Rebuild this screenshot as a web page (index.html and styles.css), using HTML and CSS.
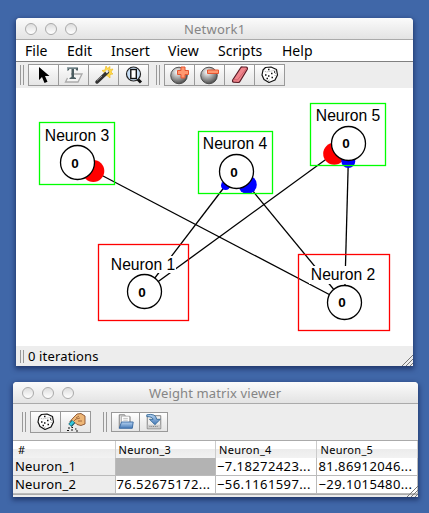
FILE: index.html
```html
<!DOCTYPE html>
<html lang="en">
<head>
<meta charset="utf-8">
<title>Network1</title>
<link rel="stylesheet" href="styles.css">
</head>
<body>
<svg class="defs" width="0" height="0" aria-hidden="true">
  <defs>
    <radialGradient id="ball" cx=".4" cy=".3" r=".75"><stop offset="0" stop-color="#fff"/><stop offset=".45" stop-color="#aaa"/><stop offset="1" stop-color="#444"/></radialGradient>
    <linearGradient id="blue" x2="0" y2="1"><stop offset="0" stop-color="#b7d4f2"/><stop offset="1" stop-color="#4478b6"/></linearGradient>
    <symbol id="dice" viewBox="0 0 20 20">
      <path d="M5.5 2.5 11 2l5.500 2.500 1 5.500-2.500 5-6 2.500-5-3L2 10l1-5z" fill="#fff" stroke="#111" stroke-width="1.200" stroke-linejoin="round"/>
      <path d="M3 5.500l3.500 1.500 5-1 4.500-1M8 16l2-1.500M15.500 8l-.5 3" fill="none" stroke="#777" stroke-width=".7" stroke-dasharray="1 1"/>
      <path d="M8 4.500h1.500M11 8.500h1.500M5 10h1.500M8 11h1.500M11.500 12.500H13M6.500 13.500H8M14 7h1.200" stroke="#111" stroke-width="1.500"/>
    </symbol>
  </defs>
</svg>

<main class="window network">
  <header class="titlebar"><i class="light"></i><i class="light"></i><i class="light"></i><span class="title">Network1</span></header>
  <nav class="menu"><span class="file">File</span><span class="edit">Edit</span><span class="insert">Insert</span><span class="view">View</span><span class="scripts">Scripts</span><span class="help">Help</span></nav>
  <div class="toolbar">
    <i class="grip"></i>
    <div class="group">
      <b class="tool"><svg viewBox="0 0 20 20"><path d="M5 2v13l3-3 2.500 6 3-1.300L11 11h4.500z" fill="#000"/></svg></b>
      <b class="tool"><svg viewBox="0 0 20 20"><path d="M7 9h11l-4 8H1.500l2-4" fill="#f4f4f4" stroke="#aaa" stroke-width="1.300"/><path d="M3 2.500h11v3h-1.500L11.500 4H10v8l2 1v1H5.500v-1l2-1V4H5.500L4.500 5.500H3z" fill="#4a5c60"/><path d="M3.500 5v-2h9" fill="none" stroke="#91a3a8"/></svg></b>
      <b class="tool"><svg viewBox="0 0 20 20"><path d="M12 1l1.500 2.500L16 1.500l-.3 3L19 4l-2 3 2 2-3 .5V13l-3-2.500L10.500 11l.2-3L8 5.500l3-.5z" fill="#ffd84a" stroke="#edbd27" stroke-width=".7"/><path d="M3 17 13.500 7" stroke="#333" stroke-width="3.500" stroke-linecap="round"/><path d="M3 15.500 8 11" stroke="#999" stroke-width="1"/><path d="M12 7.500l2-2" stroke="#eee" stroke-width="2.500"/></svg></b>
      <b class="tool"><svg viewBox="0 0 20 20"><path d="M13.500 14l3.500 3.500" stroke="#111" stroke-width="3"/><circle cx="9.500" cy="9" r="7" fill="#c9e0f7" stroke="#222" stroke-width="1.200"/><rect x="6.800" y="4.500" width="5.500" height="9" fill="#fff" stroke="#111" stroke-width="1.400"/></svg></b>
    </div>
    <i class="grip"></i>
    <div class="group">
      <b class="tool"><svg viewBox="0 0 20 20"><circle cx="9" cy="10.500" r="8.300" fill="url(#ball)" stroke="#333" stroke-width=".8"/><path d="M11 2h4v3.500h3.500v4H15V13h-4V9.500H7.500v-4H11z" fill="#ff9870" stroke="#e65531"/></svg></b>
      <b class="tool"><svg viewBox="0 0 20 20"><circle cx="9" cy="10.500" r="8.300" fill="url(#ball)" stroke="#333" stroke-width=".8"/><path d="M7.500 5h11v3.500h-11z" fill="#ff9870" stroke="#e65531"/></svg></b>
      <b class="tool"><svg viewBox="0 0 20 20"><path d="M10.500 3q.7-1.200 2-1h3.500q2 .3 1.200 2.500l-7 11.500q-.7 1.500-2 1.500l-4.500-.3q-1.700-.5-1-2.200z" fill="#ef858c" stroke="#591b25" stroke-width="1.200"/><path d="M3.500 14.500l4 .5 9-11.500" fill="none" stroke="#c95664" stroke-width=".8"/></svg></b>
      <b class="tool"><svg><use href="#dice"/></svg></b>
    </div>
  </div>
  <svg class="canvas" viewBox="16 88 397 258">
    <g class="edges"><path d="M344.500 302.500 93.500 171"/><path d="M144.500 291.500 225.500 185.500"/><path d="M344.500 302.500 247.500 184.500"/><path d="M144.500 291.500 334 153.500"/><path d="M344.500 302.500 348.300 161"/></g>
    <g fill="#f00"><circle cx="93.300" cy="171" r="11"/><circle cx="334.200" cy="153.700" r="11"/></g>
    <g fill="#00f"><circle cx="225.600" cy="185.500" r="4.600"/><circle cx="247.500" cy="184.700" r="9.300"/><circle cx="348.300" cy="161" r="7"/></g>
    <g fill="#fff"><rect x="44" y="127" width="66" height="17"/><rect x="202" y="135" width="66" height="18"/><rect x="315" y="107" width="66" height="18"/><rect x="109" y="256" width="67" height="17"/><rect x="309" y="266" width="67" height="18"/></g>
    <g class="cells"><circle cx="77.500" cy="162.500" r="17"/><circle cx="236.500" cy="171.500" r="17"/><circle cx="348.500" cy="143.500" r="17"/><circle cx="144.500" cy="291.500" r="17"/><circle cx="344.500" cy="302.500" r="17"/></g>
    <g class="frames green"><rect x="39.500" y="122.500" width="75" height="62"/><rect x="198.500" y="131.500" width="74" height="62"/><rect x="310.500" y="103.500" width="75" height="62"/></g>
    <g class="frames red"><rect x="98.500" y="244.500" width="90" height="76"/><rect x="298.500" y="254.500" width="91" height="76"/></g>
    <g class="names"><text x="44.800" y="140.500">Neuron 3</text><text x="202.800" y="149">Neuron 4</text><text x="315.800" y="121">Neuron 5</text><text x="110.800" y="270">Neuron 1</text><text x="310.800" y="280">Neuron 2</text></g>
    <g class="values"><text x="75" y="168">0</text><text x="234" y="177">0</text><text x="346" y="148">0</text><text x="142" y="297">0</text><text x="342" y="307">0</text></g>
  </svg>
  <footer class="status"><i class="grip"></i><span>0 iterations</span><svg class="resize" viewBox="0 0 12 12"><path d="M1 12 12 1M5 12l7-7M9 12l3-3"/></svg></footer>
</main>

<section class="window matrix">
  <header class="titlebar"><i class="light"></i><i class="light"></i><i class="light"></i><span class="title">Weight matrix viewer</span></header>
  <div class="toolbar">
    <i class="grip"></i>
    <div class="group">
      <b class="tool"><svg><use href="#dice"/></svg></b>
      <b class="tool"><svg viewBox="0 0 20 20"><path d="M19 4v8l-4 1.500-4-1-2-2-4 1-1-2 3-3.500 4-4 4-.5z" fill="#eeb777" stroke="#88502e" stroke-width=".9"/><path d="M14 6l-4 1-3 3M12 9h4M13 4l-3 2" fill="none" stroke="#9b6239" stroke-width=".9"/><path d="M7.500 9.500 4 13.500" stroke="#124d59" stroke-width="4.500"/><path d="M7.500 9.500 4 13" stroke="#35c8dc" stroke-width="2.800"/><path d="M2 16h2M5.500 15.500H7M1 18.500h2M5 18h2M9 17h1.500M10 19h2" stroke="#111" stroke-width="1"/></svg></b>
    </div>
    <i class="grip"></i>
    <div class="group small">
      <b class="tool"><svg viewBox="0 0 20 20"><path d="M2.500 17V2h6l1 2h5v12" fill="#ddd" stroke="#777"/><path d="M5 3.500h9v9H5z" fill="#fff" stroke="#999" stroke-width=".7"/><path d="M7 6h5M7 8h5" stroke="#aaa" stroke-width=".8"/><path d="M5 10h13l-1 7H2.500z" fill="url(#blue)" stroke="#34659f"/></svg></b>
      <b class="tool"><svg viewBox="0 0 20 20"><path d="M2.500 3h15v14.500h-15z" fill="#eee" stroke="#777"/><path d="M3 13h14v4H3z" fill="#ccc"/><path d="M5 15h9" stroke="#777" stroke-dasharray="1 1"/><path d="M2 2q10-2 11 5h4l-6 6-6-6h4Q8 4 2 4z" fill="url(#blue)" stroke="#316897"/></svg></b>
    </div>
  </div>
  <table>
    <colgroup><col class="first"><col class="mid"><col class="last"><col class="mid"></colgroup>
    <thead><tr><th>#</th><th>Neuron_3</th><th>Neuron_4</th><th>Neuron_5</th></tr></thead>
    <tbody>
      <tr><td class="label">Neuron_1</td><td class="empty"></td><td>−7.18272423...</td><td>81.86912046...</td></tr>
      <tr><td class="label">Neuron_2</td><td>76.52675172...</td><td>−56.1161597...</td><td>−29.1015480...</td></tr>
    </tbody>
  </table>
  <svg class="resize" viewBox="0 0 12 12"><path d="M1 12 12 1M5 12l7-7M9 12l3-3"/></svg>
</section>
</body>
</html>
```
FILE: styles.css
```css
* { box-sizing: border-box; }
body {
  margin: 0;
  width: 429px;
  height: 513px;
  padding: 18px 0 0 13px;
  overflow: hidden;
  background: #4067a8;
  color: #000;
  font: 13px "Noto Sans", sans-serif;
}
.defs { position: absolute; }
.window {
  display: flex;
  flex-direction: column;
  border-radius: 4px 4px 0 0;
  background: #ededed;
  box-shadow: 0 2px 5px 1px rgba(0, 10, 50, .5);
}
.network { width: 397px; height: 348px; margin-left: 3px; }
.matrix { position: relative; width: 405px; height: 115px; margin-top: 16px; }
.titlebar {
  display: grid;
  grid-template-columns: 12px 12px 12px 1fr;
  column-gap: 8px;
  align-items: center;
  height: 22px;
  padding: 0 9px;
  border-bottom: 1px solid #aaa;
  border-radius: 4px 4px 0 0;
  background: linear-gradient(#fbfbfb, #e3e3e3);
}
.light {
  width: 12px;
  height: 12px;
  border: 1px solid #aaa;
  border-radius: 50%;
  background: linear-gradient(#ddd, #fff);
}
.title { color: #858585; line-height: 20px; }
.network .title { padding-left: 99px; letter-spacing: .2px; }
.matrix .title { padding-left: 67px; letter-spacing: .13px; }
.menu {
  display: flex;
  height: 22px;
  padding-left: 9px;
  border-bottom: 1px solid #808080;
  background: #fff;
  font-size: 14px;
  line-height: 21px;
}
.file { width: 42px; }
.edit { width: 44px; }
.insert { width: 57px; }
.view { width: 50px; }
.scripts { width: 64px; }
.toolbar { display: flex; align-items: center; }
.network .toolbar { height: 26px; padding-left: 4px; }
.matrix .toolbar { height: 36px; padding-left: 9px; }
.grip { width: 4px; height: 20px; border: solid #999; border-width: 0 1px; }
.toolbar .grip { margin-right: 4px; }
.group { display: flex; border: 1px solid #999; border-right: 0; margin-right: 7px; }
.matrix .group { margin-right: 12px; }
.tool {
  display: flex;
  align-items: center;
  justify-content: center;
  width: 30px;
  height: 20px;
  border-right: 1px solid #999;
  background: linear-gradient(#fff, #f0f0f0 50%, #e6e6e6);
}
.tool svg { flex: none; width: 20px; height: 20px; }
.small .tool { width: 28px; height: 18px; }
.small svg { width: 18px; height: 18px; }
.canvas { display: block; width: 397px; height: 258px; background: #fff; }
.edges { stroke: #000; stroke-width: 1.3; }
.cells { fill: #fff; stroke: #000; stroke-width: 1.3; }
.frames { fill: none; stroke-width: 1.3; }
.green { stroke: #0f0; }
.red { stroke: #f00; }
.names { font: 15.7px "Liberation Sans", sans-serif; }
.values { font: bold 13.5px "Liberation Sans", sans-serif; text-anchor: middle; }
.status { display: flex; align-items: center; height: 20px; padding-left: 4px; }
.status .grip { height: 13px; margin-right: 4px; }
.status span { letter-spacing: .15px; }
.resize { width: 12px; height: 12px; fill: none; stroke: #777; stroke-width: 1; }
.status .resize { margin: auto 0 0 auto; }
.matrix .resize { position: absolute; right: 0; bottom: 0; }
table {
  width: 405px;
  height: 54px;
  border-top: 1px solid #aaa;
  border-bottom: 1px solid #aaa;
  border-collapse: separate;
  border-spacing: 0;
  table-layout: fixed;
  background: #fff;
}
.first { width: 102px; }
.mid { width: 100px; }
.last { width: 101px; }
th, td { padding: 0; overflow: hidden; white-space: nowrap; text-align: left; }
th {
  height: 17px;
  padding-left: 3px;
  background: linear-gradient(#fff 50%, #ececec 50%, #f2f2f2);
  border-right: 1px solid #ccc;
  font-size: 11px;
  font-weight: 400;
  line-height: 16px;
  letter-spacing: .3px;
}
th:first-child { padding-left: 5px; }
td {
  height: 18px;
  padding-left: 1px;
  border-right: 1px solid #bbb;
  border-bottom: 1px solid #bbb;
  line-height: 17px;
  letter-spacing: .4px;
}
.label { padding-left: 2px; background: #ededed; letter-spacing: .2px; }
.empty { background: #b3b3b3; }
```
